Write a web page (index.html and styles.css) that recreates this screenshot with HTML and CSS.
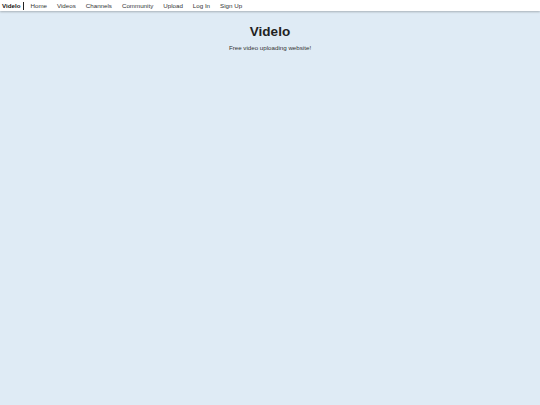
FILE: index.html
```html
<!DOCTYPE html>
<html lang="en">
<head>
<meta charset="utf-8">
<title>Videlo</title>
<link rel="stylesheet" href="styles.css">
</head>
<body>
<nav class="topbar">
  <a class="brand" href="#">Videlo</a>
  <span class="sep"></span>
  <a class="link" href="#">Home</a>
  <a class="link" href="#">Videos</a>
  <a class="link" href="#">Channels</a>
  <a class="link" href="#">Community</a>
  <a class="link" href="#">Upload</a>
  <a class="link" href="#">Log In</a>
  <a class="link" href="#">Sign Up</a>
</nav>
<header class="hero">
  <h1 class="title">Videlo</h1>
  <p class="tagline">Free video uploading website!</p>
</header>
</body>
</html>
```
FILE: styles.css
```css
html, body {
  margin: 0;
  padding: 0;
  height: 100%;
}
body {
  background: #dfebf5;
  font-family: "Liberation Sans", Arial, sans-serif;
  color: #222;
}
.topbar {
  display: flex;
  align-items: center;
  height: 11px;
  background: #fff;
  box-shadow: 0 1px 2px rgba(0,0,0,0.25);
  padding: 0 2px;
  font-size: 6.2px;
}
.brand {
  font-weight: 700;
  color: #111;
  text-decoration: none;
}
.sep {
  width: 1px;
  height: 8px;
  background: #222;
  margin: 0 6px 0 3px;
}
.link {
  color: #333;
  text-decoration: none;
  margin-right: 10px;
}
.hero {
  text-align: center;
  padding-top: 12px;
}
.title {
  margin: 0;
  font-size: 13.5px;
  font-weight: 700;
  color: #222;
  line-height: 17px;
}
.tagline {
  margin: 4px 0 0;
  font-size: 6.2px;
  color: #333;
}
```
